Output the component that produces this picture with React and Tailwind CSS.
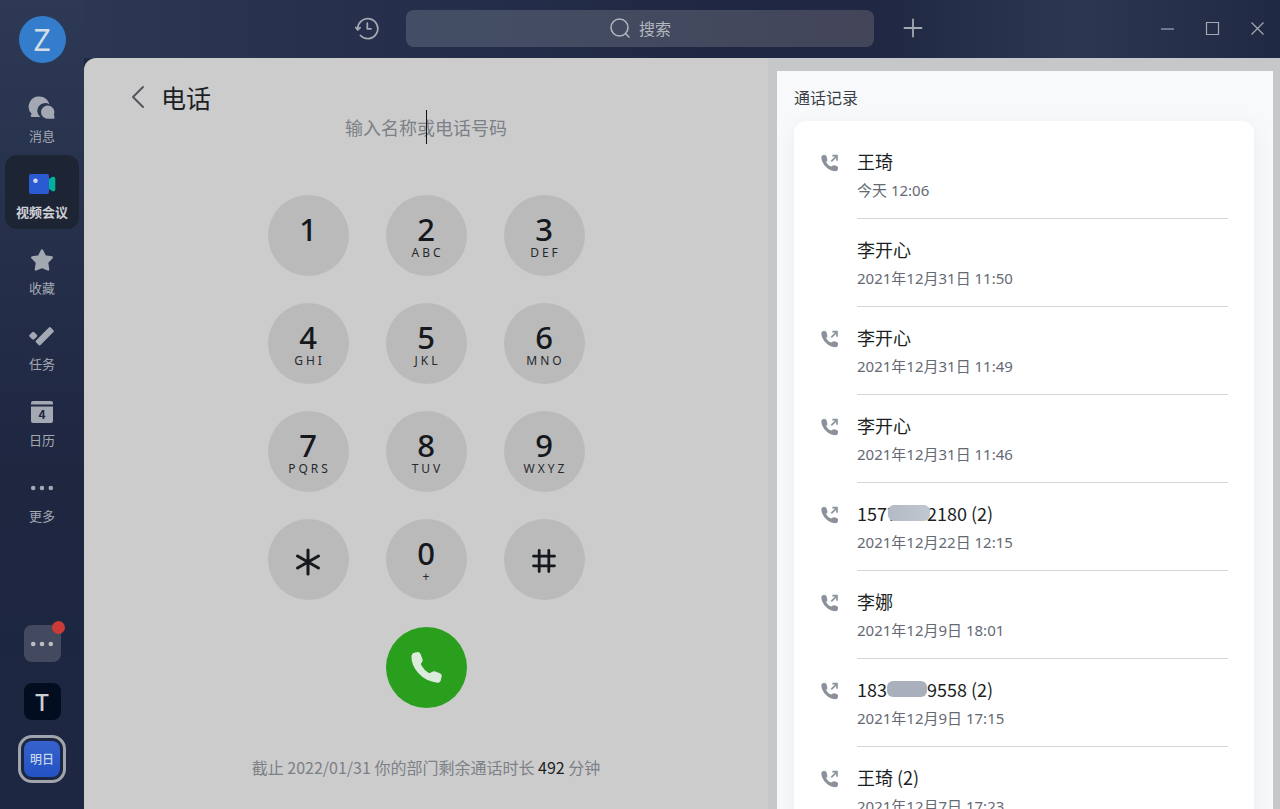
import React, { useState } from 'react';

const CALLS = [
  { id: 1, name: '王琦', time: '今天 12:06', out: true },
  { id: 2, name: '李开心', time: '2021年12月31日 11:50', out: false },
  { id: 3, name: '李开心', time: '2021年12月31日 11:49', out: true },
  { id: 4, name: '李开心', time: '2021年12月31日 11:46', out: true },
  { id: 5, head: '1577', tail: '2180 (2)', time: '2021年12月22日 12:15', out: true },
  { id: 6, name: '李娜', time: '2021年12月9日 18:01', out: true },
  { id: 7, head: '183', tail: '9558 (2)', time: '2021年12月9日 17:15', out: true },
  { id: 8, name: '王琦 (2)', time: '2021年12月7日 17:23', out: true },
];

const KEYS = [
  { d: '1', l: '' }, { d: '2', l: 'ABC' }, { d: '3', l: 'DEF' },
  { d: '4', l: 'GHI' }, { d: '5', l: 'JKL' }, { d: '6', l: 'MNO' },
  { d: '7', l: 'PQRS' }, { d: '8', l: 'TUV' }, { d: '9', l: 'WXYZ' },
  { d: '*' }, { d: '0', l: '+' }, { d: '#' },
];

const ChatIcon = () => (
  <svg viewBox="0 0 28 28" className="w-7 h-7" fill="currentColor">
    <path d="M11.500 2.500a10.200 10.200 0 0 1 10 8 7.700 7.700 0 0 0-9 12.500H3.800c-1.200 0-1.500-.9-.9-1.800l.7-1.400A10.200 10.200 0 0 1 11.500 2.500Z" />
    <path d="M19.700 11.500a6.600 6.600 0 0 1 6.300 8.800l.5 3.500c0 .700-.3 1-.9 1h-5.900a6.600 6.600 0 0 1 0-13.300Z" />
  </svg>
);

const VideoIcon = () => (
  <svg viewBox="0 0 28 28" className="w-7 h-7">
    <path d="M20.500 9.500 24 6.900c1.500-.7 3.300 0 3.300 1.600v11c0 1.600-1.800 2.300-3.300 1.600l-3.500-2.600Z" fill="#04b09b" />
    <rect x="1" y="4" width="20" height="20" rx="2" fill="#2b5bd3" />
    <circle cx="7.500" cy="10.700" r="2.300" fill="#d3dbea" />
  </svg>
);

const StarIcon = () => (
  <svg viewBox="0 0 28 28" className="w-7 h-7" fill="currentColor" stroke="currentColor" strokeWidth="2.400" strokeLinejoin="round">
    <path d="m14 4.500 2.900 5.900 6.900 1.100-4.800 4.800 1.100 7.200L14 21l-6.100 2.500L9 16.300l-4.800-4.800 6.900-1.100Z" />
  </svg>
);

const TaskIcon = () => (
  <svg viewBox="0 0 28 28" className="w-7 h-7" fill="currentColor">
    <rect x="2" y="10.500" width="6.500" height="6.500" rx="1.400" transform="rotate(45 5.250 13.750)" />
    <rect x="6.200" y="11" width="21" height="6.500" rx="1.400" transform="rotate(-45 16.700 14.250)" />
  </svg>
);

const CalendarIcon = () => (
  <span className="relative block w-7 h-7">
    <svg viewBox="0 0 28 28" className="w-7 h-7" fill="currentColor">
      <path d="M5 3h18a2 2 0 0 1 2 2v1.500H3V5a2 2 0 0 1 2-2ZM3 8.500h22V23a2 2 0 0 1-2 2H5a2 2 0 0 1-2-2Z" />
    </svg>
    <span className="absolute inset-x-0 top-2 text-center text-xs leading-4 font-bold text-[#1f2842]">4</span>
  </span>
);

const DotsIcon = () => (
  <svg viewBox="0 0 28 28" className="w-7 h-7" fill="currentColor">
    <circle cx="5.200" cy="14" r="2.300" />
    <circle cx="14" cy="14" r="2.300" />
    <circle cx="22.800" cy="14" r="2.300" />
  </svg>
);

const NAV = [
  { label: '消息', Icon: ChatIcon },
  { label: '视频会议', Icon: VideoIcon, active: true },
  { label: '收藏', Icon: StarIcon },
  { label: '任务', Icon: TaskIcon },
  { label: '日历', Icon: CalendarIcon },
  { label: '更多', Icon: DotsIcon },
];

const HandsetIcon = () => (
  <svg viewBox="0 0 94 94" className="w-[31px] h-[31px]" fill="#dcebdb">
    <path d="M2 10Q4 3 10 2L20 0Q27 0 29 6L35 22Q36 27 33 31Q28 36 32 41Q40 56 53 63Q58 65 63 61Q68 57 74 59L89 65Q94 68 93 74L90 87Q87 94 80 93Q45 90 22 64Q-2 36 2 10Z" />
  </svg>
);

const OutgoingIcon = () => (
  <svg viewBox="0 0 54 54" className="w-[18px] h-[18px] text-[#8c929b]" fill="currentColor" aria-label="呼出">
    <path d="M1 9Q2 4 7 3L11 3Q16 3 17 8L19 16Q20 19 17 22Q15 24 17 27Q21 34 28 37Q31 38 33 36Q36 34 39 34L47 36Q51 37 51 41L51 46Q50 51 45 52Q29 52 15 39Q1 25 1 9Z" />
    <path d="m31 22 17-17M34 5h14v15" fill="none" stroke="currentColor" strokeWidth="5" />
  </svg>
);

function Sidebar() {
  return (
    <aside className="w-[84px] shrink-0 flex flex-col items-center pt-4 pb-[26px] bg-linear-to-b from-[#2d3955] via-[#1e2640] via-60% to-[#1d2742]">
      <button className="w-[47px] h-[47px] shrink-0 rounded-full bg-[#337dcc] text-[#d5dde6] text-[30px] leading-[47px] font-['Noto_Sans',sans-serif]">Z</button>
      <nav className="mt-4 flex flex-col gap-[2px]">
        {NAV.map(({ label, Icon, active }) => (
          <button key={label}
            className={`w-[74px] h-[74px] rounded-xl flex flex-col items-center pt-[15px] text-[13px] leading-5 ${active ? 'bg-[#1d2434] font-bold text-[#ced0d4]' : 'text-[#a3a8b2]'}`}>
            <Icon />
            <span className="mt-1">{label}</span>
          </button>
        ))}
      </nav>
      <div className="mt-auto flex flex-col items-center">
        <button aria-label="更多应用" className="relative w-[37px] h-[37px] rounded-lg bg-[#434a5f] text-[#bcbec4] flex items-center justify-center">
          <DotsIcon />
          <span className="absolute -top-1 -right-1 w-[13px] h-[13px] rounded-full bg-[#cb3c38]" />
        </button>
        <button className="mt-[21px] w-[37px] h-[37px] rounded-lg bg-[#020e1f] text-[#cdd0d3] text-2xl leading-9 font-medium font-['Noto_Sans',sans-serif]">T</button>
        <button className="mt-[15px] w-12 h-12 rounded-[14px] border-[3px] border-[#a0a4ad] p-[3px]">
          <span className="block w-9 h-9 rounded-lg bg-linear-to-b from-[#3562cc] to-[#2352c4] text-xs leading-9 text-[#c9d5e8] font-medium">明日</span>
        </button>
      </div>
    </aside>
  );
}

function TopBar() {
  return (
    <header className="h-[58px] shrink-0 grid grid-cols-[322fr_468fr_406fr] items-center text-[#a3a8b2] bg-linear-to-r from-[#2b3754] via-[#1f2742] via-55% to-[#202943]">
      <div className="flex justify-end pr-[27px] pb-0.5">
        <button aria-label="历史记录">
          <svg viewBox="0 0 24 24" className="w-6 h-6" fill="none" stroke="currentColor" strokeWidth="1.800" strokeLinecap="round" strokeLinejoin="round">
            <path d="M2.800 13.500A10 10 0 1 1 5.500 19.500" />
            <path d="m.8 11.500 2 2.300 2.300-2.100M12.300 7.200v5.600H16" />
          </svg>
        </button>
      </div>
      <button className="h-[37px] mb-0.5 rounded-lg bg-linear-to-r from-[#434f66] to-[#434559] flex items-center justify-center gap-2 text-base text-[#b3b7bf]">
        <svg viewBox="0 0 22 22" className="w-[22px] h-[22px]" fill="none" stroke="currentColor" strokeWidth="1.500" strokeLinecap="round">
          <circle cx="10.500" cy="10.500" r="8.500" />
          <path d="m16.700 16.700 3.300 3.300" />
        </svg>
        搜索
      </button>
      <div className="flex items-center justify-between self-stretch pb-0.5 bg-linear-to-r from-transparent via-[#2b3751] to-transparent">
        <button aria-label="新建" className="ml-[29px]">
          <svg viewBox="0 0 20 20" className="w-5 h-5" stroke="currentColor" strokeWidth="1.800" strokeLinecap="round">
            <path d="M10 1.500v17M1.500 10h17" />
          </svg>
        </button>
        <div className="flex">
          {[['最小化', 'M1 8h13'], ['最大化', 'M1.500 1.500h12v12h-12Z'], ['关闭', 'm1.500 1.500 12 12m0-12-12 12']].map(([label, d]) => (
            <button key={label} aria-label={label} className="w-[45px] h-10 flex items-center justify-center">
              <svg viewBox="0 0 15 15" className="w-[15px] h-[15px]" fill="none" stroke="currentColor" strokeWidth="1.200"><path d={d} /></svg>
            </button>
          ))}
        </div>
      </div>
    </header>
  );
}

function DialKey({ d, l, onPress }) {
  return (
    <button onClick={() => onPress(d)} aria-label={d}
      className="w-[81px] h-[81px] rounded-full bg-[#bababa] flex flex-col items-center text-[#15181d] font-['Noto_Sans',sans-serif] cursor-pointer">
      {d === '*' && (
        <svg viewBox="0 0 28 28" className="w-7 h-7 mt-[29px]" stroke="currentColor" strokeWidth="3" strokeLinecap="round">
          <path d="M14 2v24M3.500 8 24.500 20M24.500 8 3.500 20" />
        </svg>
      )}
      {d === '#' && (
        <svg viewBox="0 0 28 28" className="w-7 h-7 mt-7" stroke="currentColor" strokeWidth="2.800" strokeLinecap="round">
          <path d="M9.200 3.500v21M18.800 3.500v21M3.500 9.200h21M3.500 18.800h21" />
        </svg>
      )}
      {l !== undefined && (
        <>
          <span className="mt-[18px] text-[31px] leading-8 font-medium">{d}</span>
          <span className="pl-[3px] text-xs leading-4 tracking-[3px] text-[#26292e]">{l}</span>
        </>
      )}
    </button>
  );
}

function Dialer() {
  const [num, setNum] = useState('');
  return (
    <section className="flex flex-col bg-[#cccccc] rounded-tl-xl pt-[25px]">
      <div className="flex items-center pl-[47px] h-7">
        <button aria-label="返回" className="text-[#54585e]">
          <svg viewBox="0 0 14 24" className="w-[14px] h-6" fill="none" stroke="currentColor" strokeWidth="2" strokeLinecap="round" strokeLinejoin="round">
            <path d="M12 2 2 12l10 10" />
          </svg>
        </button>
        <h1 className="ml-4 text-[25px] leading-7 text-[#1c1f24]">电话</h1>
      </div>
      <div className="relative self-center">
        <input aria-label="电话号码" value={num} onChange={(e) => setNum(e.target.value)} placeholder="输入名称或电话号码"
          className="block w-80 h-8 bg-transparent text-center text-lg text-[#15181d] placeholder:text-[#7c8087] outline-none" />
        <span className="absolute left-1/2 -top-px w-px h-[34px] bg-[#111]" />
      </div>
      <div className="mt-[52px] self-center grid grid-cols-3 gap-x-[37px] gap-y-[27px]">
        {KEYS.map((k) => <DialKey key={k.d} {...k} onPress={(d) => setNum(num + d)} />)}
        <button aria-label="呼叫" className="col-start-2 w-[81px] h-[81px] rounded-full bg-[#2a9f1e] flex items-center justify-center cursor-pointer">
          <HandsetIcon />
        </button>
      </div>
      <p className="mt-[47px] text-center text-base leading-6 text-[#7c8087]">
        截止 2022/01/31 你的部门剩余通话时长 <span className="text-[#1c1f24]">492</span> 分钟
      </p>
    </section>
  );
}

function CallLog() {
  return (
    <section className="flex flex-col min-h-0 bg-[#c6c7c9] pt-[13px] pl-[9px] pr-[7px]">
      <div className="flex-1 min-h-0 overflow-hidden bg-[#f8f9fb] pl-[17px] pr-[19px]">
        <h2 className="pt-[14px] pb-3 text-base leading-6 text-[#3b3f45]">通话记录</h2>
        <ul className="rounded-t-xl bg-white pt-2.5 pl-[27px] pr-[26px] shadow-[0_6px_24px_rgba(31,35,41,0.06)]">
          {CALLS.map((c) => (
            <li key={c.id} className="flex h-[88px]">
              <div className="w-9 shrink-0 pt-[23px]">{c.out && <OutgoingIcon />}</div>
              <div className="flex-1 pt-4 border-b border-[#d4d5d8]">
                <div className="text-lg leading-7 text-[#1c1f24] flex items-center">
                  {c.name || (
                    <>
                      <span>{c.head}</span>
                      <span className={`relative h-4 rounded-md ${c.head.length > 3 ? 'w-[42px] -ml-[9px] -mr-[3px] bg-linear-to-r from-[#b4bac5] to-[#c1c7d0]' : 'w-10 bg-[#aab0bb]'}`} />
                      <span>{c.tail}</span>
                    </>
                  )}
                </div>
                <div className="text-[15px] leading-[30px] text-[#646a73] font-['Noto_Sans','Noto_Sans_CJK_SC',sans-serif]">{c.time}</div>
              </div>
            </li>
          ))}
        </ul>
      </div>
    </section>
  );
}

export default function App() {
  return (
    <div className="h-screen flex overflow-hidden font-['Noto_Sans_CJK_SC',sans-serif]">
      <Sidebar />
      <div className="flex-1 min-w-0 flex flex-col bg-[#1f2742]">
        <TopBar />
        <main className="flex-1 min-h-0 grid grid-cols-[684fr_512fr] grid-rows-[minmax(0,1fr)]">
          <Dialer />
          <CallLog />
        </main>
      </div>
    </div>
  );
}
